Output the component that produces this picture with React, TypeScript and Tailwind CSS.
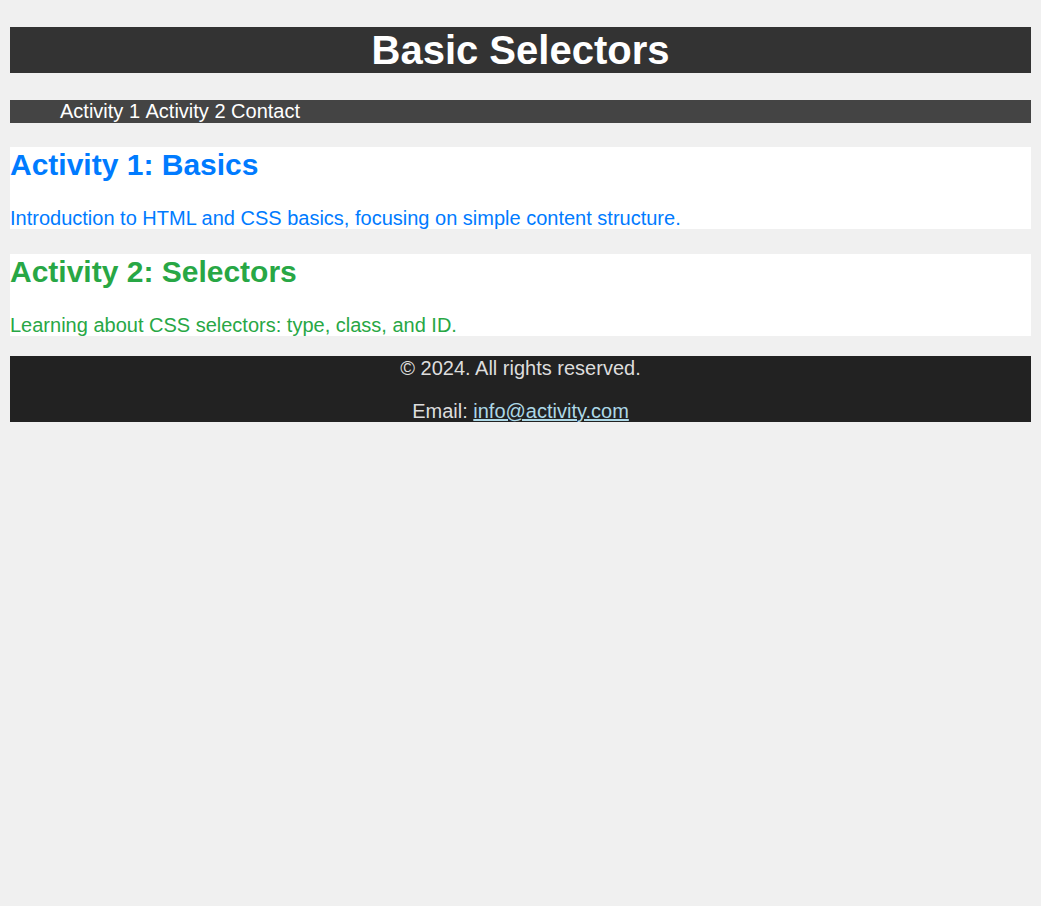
const App = () => {
    return (
        <div className="min-h-screen bg-[#f0f0f0] px-[10px] pt-[27px] text-[20px] leading-[23px] font-['Liberation_Sans',Arial,sans-serif]">
            {/* Header */}
            <header className="bg-[#333333]">
                <h1 className="text-center text-[40px] font-bold leading-[46px] text-white">Basic Selectors</h1>
            </header>

            {/* Nav */}
            <nav className="mt-[27px] bg-[#444444]">
                <ul className="flex gap-[5.5px] pl-[50px] text-white">
                    <li>Activity 1</li>
                    <li>Activity 2</li>
                    <li>Contact</li>
                </ul>
            </nav>

            <section className="mt-[24px] bg-white text-[#007bff]">
                <h2 className="pt-px text-[30px] font-bold leading-[33px]">Activity 1: Basics</h2>
                <p className="mt-[25px] pt-px leading-[22px]">
                    Introduction to HTML and CSS basics, focusing on simple content structure.
                </p>
            </section>

            <section className="mt-[25px] bg-white text-[#28a745]">
                <h2 className="pt-px text-[30px] font-bold leading-[33px]">Activity 2: Selectors</h2>
                <p className="mt-[25px] pt-px leading-[22px]">Learning about CSS selectors: type, class, and ID.</p>
            </section>

            {/* Footer */}
            <footer className="mt-[20px] bg-[#222222] text-center text-[#dddddd]">
                <p className="pt-px leading-[22px]">© 2024. All rights reserved.</p>
                <p className="mt-[20px] pt-px leading-[22px]">
                    Email:{" "}
                    <a href="#" className="text-[#add8e6] underline">
                        info@activity.com
                    </a>
                </p>
            </footer>
        </div>
    );
};

export default App;
